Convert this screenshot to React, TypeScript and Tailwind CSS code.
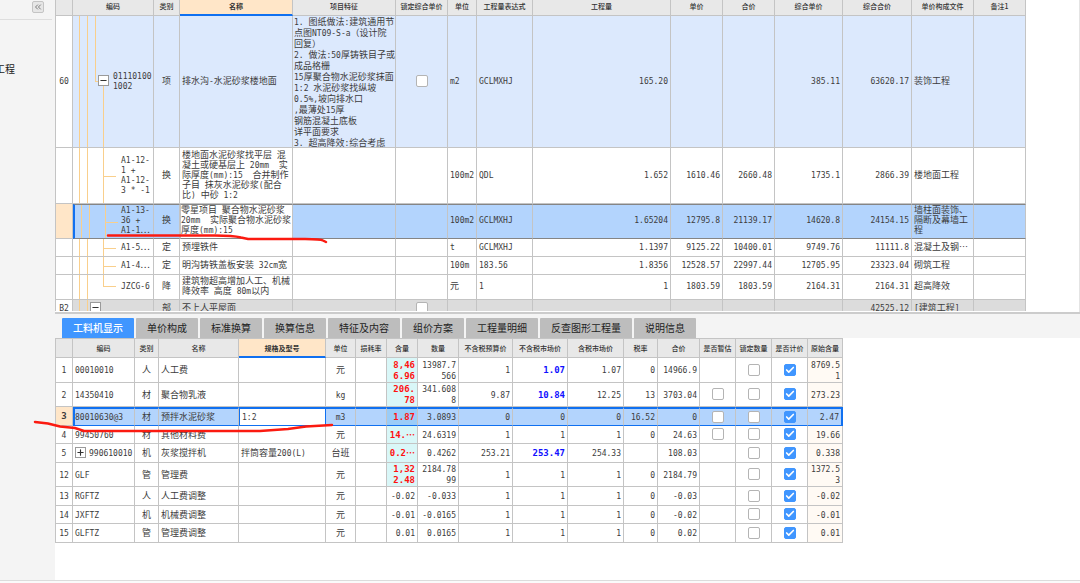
import React from 'react';
import clsx from 'clsx';
import { Check, ChevronsLeft, Minus, Plus } from 'lucide-react';

type Align = 'left' | 'center' | 'right';

interface Column {
  label: string;
  width: string;
  align: Align;
  active?: boolean;
}

interface QuotaRow {
  no: string;
  code: string;
  tree: 'parent' | 'child' | 'last' | 'section';
  height: string;
  tone?: 'item' | 'selected' | 'section';
  lock?: boolean;
  cells: string[];
}

interface ResourceRow {
  no: string;
  height: string;
  selected?: boolean;
  expandable?: boolean;
  cells: string[];
  estimate?: boolean;
  tinted?: boolean;
  blue?: boolean;
}

const QUOTA_COLUMNS: Column[] = [
  { label: '', width: 'w-[17px]', align: 'center' },
  { label: '编码', width: 'w-[81px]', align: 'left' },
  { label: '类别', width: 'w-[26px]', align: 'center' },
  { label: '名称', width: 'w-[113px]', align: 'left', active: true },
  { label: '项目特征', width: 'w-[103px]', align: 'left' },
  { label: '锁定综合单价', width: 'w-[52px]', align: 'center' },
  { label: '单位', width: 'w-[29px]', align: 'left' },
  { label: '工程量表达式', width: 'w-[56px]', align: 'left' },
  { label: '工程量', width: 'w-[138px]', align: 'right' },
  { label: '单价', width: 'w-[52px]', align: 'right' },
  { label: '合价', width: 'w-[52px]', align: 'right' },
  { label: '综合单价', width: 'w-[68px]', align: 'right' },
  { label: '综合合价', width: 'w-[69px]', align: 'right' },
  { label: '单价构成文件', width: 'w-[62px]', align: 'left' },
  { label: '备注1', width: 'w-[52px]', align: 'left' },
];

const FEATURES = `1. 图纸做法:建筑通用节
点图NT09-S-a（设计院
回复）
2. 做法:50厚铸铁目子或
成品格栅
15厚聚合物水泥砂浆抹面
1:2 水泥砂浆找纵坡
0.5%,坡向排水口
,最薄处15厚
钢筋混凝土底板
详平面要求
3. 超高降效:综合考虑`;

// cells: 类别, 名称, 项目特征, 锁定, 单位, 表达式, 工程量, 单价, 合价, 综合单价, 综合合价, 构成文件, 备注
const QUOTA_ROWS: QuotaRow[] = [
  {
    no: '60', code: '01110100\n1002', tree: 'parent', height: 'h-[132px]', tone: 'item', lock: true,
    cells: ['项', '排水沟-水泥砂浆楼地面', FEATURES, '', 'm2', 'GCLMXHJ', '165.20', '', '', '385.11', '63620.17', '装饰工程', ''],
  },
  {
    no: '', code: 'A1-12-\n1 +\nA1-12-\n3 * -1', tree: 'child', height: 'h-[56px]',
    cells: ['换', '楼地面水泥砂浆找平层 混\n凝土或硬基层上 20mm  实\n际厚度(mm):15  合并制作\n子目 抹灰水泥砂浆(配合\n比) 中砂 1:2', '', '', '100m2', 'QDL', '1.652', '1610.46', '2660.48', '1735.1', '2866.39', '楼地面工程', ''],
  },
  {
    no: '', code: 'A1-13-\n36 +\nA1-1⋯', tree: 'child', height: 'h-[35px]', tone: 'selected',
    cells: ['换', '零星项目 聚合物水泥砂浆\n20mm  实际聚合物水泥砂浆\n厚度(mm):15', '', '', '100m2', 'GCLMXHJ', '1.65204', '12795.8', '21139.17', '14620.8', '24154.15', '墙柱面装饰、\n隔断及幕墙工\n程', ''],
  },
  {
    no: '', code: 'A1-5⋯', tree: 'child', height: 'h-[18px]',
    cells: ['定', '预埋铁件', '', '', 't', 'GCLMXHJ', '1.1397', '9125.22', '10400.01', '9749.76', '11111.8', '混凝土及钢⋯', ''],
  },
  {
    no: '', code: 'A1-4⋯', tree: 'child', height: 'h-[18px]',
    cells: ['定', '明沟铸铁盖板安装 32cm宽', '', '', '100m', '183.56', '1.8356', '12528.57', '22997.44', '12705.95', '23323.04', '砌筑工程', ''],
  },
  {
    no: '', code: 'JZCG-6', tree: 'last', height: 'h-[25px]',
    cells: ['降', '建筑物超高增加人工、机械\n降效率 高度 80m以内', '', '', '元', '1', '1', '1803.59', '1803.59', '2164.31', '2164.31', '超高降效', ''],
  },
  {
    no: 'B2', code: '', tree: 'section', height: 'h-[18px]', tone: 'section', lock: true,
    cells: ['部', '不上人平屋面', '', '', '', '', '', '', '', '', '42525.12', '[建筑工程]', ''],
  },
];

const TABS = ['工料机显示', '单价构成', '标准换算', '换算信息', '特征及内容', '组价方案', '工程量明细', '反查图形工程量', '说明信息'];

const RESOURCE_COLUMNS: Column[] = [
  { label: '', width: 'w-[17px]', align: 'center' },
  { label: '编码', width: 'w-[62px]', align: 'left' },
  { label: '类别', width: 'w-[24px]', align: 'center' },
  { label: '名称', width: 'w-[80px]', align: 'left' },
  { label: '规格及型号', width: 'w-[87px]', align: 'left', active: true },
  { label: '单位', width: 'w-[30px]', align: 'center' },
  { label: '损耗率', width: 'w-[31px]', align: 'right' },
  { label: '含量', width: 'w-[31px]', align: 'right' },
  { label: '数量', width: 'w-[41px]', align: 'right' },
  { label: '不含税预算价', width: 'w-[54px]', align: 'right' },
  { label: '不含税市场价', width: 'w-[55px]', align: 'right' },
  { label: '含税市场价', width: 'w-[56px]', align: 'right' },
  { label: '税率', width: 'w-[34px]', align: 'right' },
  { label: '合价', width: 'w-[42px]', align: 'right' },
  { label: '是否暂估', width: 'w-[36px]', align: 'center' },
  { label: '锁定数量', width: 'w-[36px]', align: 'center' },
  { label: '是否计价', width: 'w-[36px]', align: 'center' },
  { label: '原始含量', width: 'w-[35px]', align: 'right' },
];

// cells: 编码 ... 合价, then 原始含量
const RESOURCE_ROWS: ResourceRow[] = [
  { no: '1', height: 'h-[25px]', tinted: true, blue: true, cells: ['00010010', '人', '人工费', '', '元', '', '8,46\n6.96', '13987.7\n566', '1', '1.07', '1.07', '0', '14966.9', '8769.5\n1'] },
  { no: '2', height: 'h-[24px]', tinted: true, blue: true, estimate: true, cells: ['14350410', '材', '聚合物乳液', '', 'kg', '', '206.\n78', '341.608\n8', '9.87', '10.84', '12.25', '13', '3703.04', '273.23'] },
  { no: '3', height: 'h-[19px]', tinted: true, selected: true, estimate: true, cells: ['80010630@3', '材', '预拌水泥砂浆', '1:2', 'm3', '', '1.87', '3.0893', '0', '0', '0', '16.52', '0', '2.47'] },
  { no: '4', height: 'h-[18px]', tinted: true, estimate: true, cells: ['99450760', '材', '其他材料费', '', '元', '', '14.⋯', '24.6319', '1', '1', '1', '0', '24.63', '19.66'] },
  { no: '5', height: 'h-[19px]', tinted: true, blue: true, expandable: true, cells: ['990610010', '机', '灰浆搅拌机', '拌筒容量200(L)', '台班', '', '0.2⋯', '0.4262', '253.21', '253.47', '254.33', '', '108.03', '0.338'] },
  { no: '12', height: 'h-[24px]', tinted: true, cells: ['GLF', '管', '管理费', '', '元', '', '1,32\n2.48', '2184.78\n99', '1', '1', '1', '0', '2184.79', '1372.5\n3'] },
  { no: '13', height: 'h-[19px]', cells: ['RGFTZ', '人', '人工费调整', '', '元', '', '-0.02', '-0.033', '1', '1', '1', '0', '-0.03', '-0.02'] },
  { no: '14', height: 'h-[18px]', cells: ['JXFTZ', '机', '机械费调整', '', '元', '', '-0.01', '-0.0165', '1', '1', '1', '0', '-0.02', '-0.01'] },
  { no: '15', height: 'h-[19px]', cells: ['GLFTZ', '管', '管理费调整', '', '元', '', '0.01', '0.0165', '1', '1', '1', '0', '0.02', '0.01'] },
];

const alignClass: Record<Align, string> = {
  left: 'text-left',
  center: 'text-center',
  right: 'text-right pr-[2px]',
};

// Latin and digits are set in a mono face one size below the Chinese text
const Txt: React.FC<{ children: string; strong?: boolean }> = ({ children, strong }) => (
  <span className={clsx('whitespace-pre', strong && 'font-bold')}>
    {children.split(/([\x20-\x7e]+)/).map((part, i) =>
      i % 2 ? (
        <span key={i} className={clsx("font-['DejaVu_Sans_Mono',monospace] leading-none", strong ? 'text-[9px]' : 'text-[8px]')}>
          {part}
        </span>
      ) : (
        part
      ),
    )}
  </span>
);

const Box: React.FC<{ label: string; checked?: boolean }> = ({ label, checked }) => (
  <span className="relative inline-block size-[12px] align-middle">
    <input
      type="checkbox"
      aria-label={label}
      defaultChecked={checked}
      className="peer block size-[12px] appearance-none rounded-[2px] border border-[#b4b4b4] bg-white checked:border-[#4096ff] checked:bg-[#4096ff]"
    />
    <Check size={10} strokeWidth={4} className="pointer-events-none absolute top-px left-px hidden text-white peer-checked:block" />
  </span>
);

const Toggle: React.FC<{ open?: boolean; label: string }> = ({ open, label }) => (
  <button type="button" aria-label={label} className="grid size-[11px] shrink-0 place-items-center border border-[#9a9a9a] bg-white text-[#333]">
    {open ? <Minus size={9} strokeWidth={3} /> : <Plus size={9} strokeWidth={3} />}
  </button>
);

const HeadRow: React.FC<{ columns: Column[]; cellClass: string }> = ({ columns, cellClass }) => (
  <tr>
    {columns.map((c, i) => (
      <th
        key={i}
        className={clsx(
          'border-r border-[#c4c4c4] p-0 text-[7px] whitespace-nowrap text-[#333]',
          c.width,
          cellClass,
          c.active ? 'border-b-2 border-b-[#1070f0] bg-[#ffe6c8] font-bold' : 'border-b bg-[#e8e8e8] font-medium',
        )}
      >
        {c.label}
      </th>
    ))}
    <td />
  </tr>
);

const Line: React.FC<{ className: string }> = ({ className }) => (
  <i className={clsx('absolute border-[#f9cf8c]', className)} />
);

const TreeLines: React.FC<{ kind: QuotaRow['tree'] }> = ({ kind }) => (
  <>
    <Line className="inset-y-0 left-[6px] border-l" />
    <Line className="inset-y-0 left-[14px] border-l" />
    {kind === 'parent' && (
      <>
        <Line className="top-0 bottom-1/2 left-[22px] w-[3px] border-b border-l" />
        <Line className="top-1/2 bottom-0 left-[30px] border-l" />
      </>
    )}
    {kind === 'child' && <Line className="inset-y-0 left-[30px] border-l" />}
    {kind === 'child' && <Line className="top-1/2 left-[30px] w-[13px] border-b" />}
    {kind === 'last' && <Line className="top-0 bottom-1/2 left-[30px] w-[13px] border-b border-l" />}
  </>
);

const QuotaGrid: React.FC = () => (
  <table className="w-full table-fixed border-separate border-spacing-0 border-l border-[#c4c4c4] leading-[10px]">
    <thead>
      <HeadRow columns={QUOTA_COLUMNS} cellClass="h-[16px] pb-[3px] leading-[10px]" />
    </thead>
    <tbody>
      {QUOTA_ROWS.map((row, r) => {
        const selected = row.tone === 'selected';
        const cell = clsx(
          'border-r border-b border-[#c4c4c4] px-0 pt-0',
          selected ? 'pb-[3px]' : 'pb-[2px]',
          row.height,
          row.tone === 'item' && 'bg-[#dce9fd]',
          row.tone === 'section' && 'bg-[#dcdcdc]',
          selected && 'border-t border-y-[#858585]',
        );
        return (
          <tr key={r}>
            <td className={clsx('border-r border-b border-[#c4c4c4] px-0 pt-0 pb-[2px] text-center', selected && 'bg-[#ffe6c8]')}>
              <Txt>{row.no}</Txt>
            </td>
            <td className={clsx(cell, 'relative', selected && 'border-l-2 border-l-[#1070f0] bg-[#b3d4fd]')}>
              <TreeLines kind={row.tree} />
              {row.tree === 'parent' && (
                <div className="relative flex items-center gap-[4px] pl-[25px]">
                  <Toggle open label="折叠" />
                  <Txt>{row.code}</Txt>
                </div>
              )}
              {row.tree === 'section' && (
                <div className="relative pl-[17px]">
                  <Toggle open label="折叠" />
                </div>
              )}
              {(row.tree === 'child' || row.tree === 'last') && (
                <div className={selected ? 'pl-[46px]' : 'pl-[48px]'}>
                  <Txt>{row.code}</Txt>
                </div>
              )}
            </td>
            {row.cells.map((text, i) => {
              const column = QUOTA_COLUMNS[i + 2];
              const features = i === 2 && text !== '';
              return (
                <td
                  key={i}
                  className={clsx(
                    cell,
                    alignClass[column.align],
                    features && 'align-top',
                    column.align === 'left' && !(selected && column.active) && (features ? 'pl-px' : 'pl-[2px]'),
                    selected && (column.active ? 'border border-[#858585] bg-white' : 'bg-[#b3d4fd]'),
                  )}
                >
                  {i === 3 && row.lock ? (
                    <Box label="锁定综合单价" />
                  ) : (
                    <div className={clsx(features && 'h-[129px] leading-[11px]')}>
                      <Txt>{text}</Txt>
                    </div>
                  )}
                </td>
              );
            })}
            <td />
          </tr>
        );
      })}
    </tbody>
  </table>
);

const ResourceGrid: React.FC = () => (
  <table className="w-full table-fixed border-separate border-spacing-0 border-l border-[#c4c4c4] leading-[11px]">
    <thead>
      <HeadRow columns={RESOURCE_COLUMNS} cellClass="h-[20px] border-t border-t-[#c4c4c4] leading-[10px]" />
    </thead>
    <tbody>
      {RESOURCE_ROWS.map((row) => {
        const cell = clsx(
          'border-r border-b border-[#c4c4c4] px-0 pt-0 pb-px',
          row.height,
          row.selected && 'border-y-2 border-y-[#1070f0]',
        );
        const fill = row.selected && 'bg-[#b3d4fd]';
        return (
          <tr key={row.no}>
            <td className={clsx('border-r border-b border-[#c4c4c4] px-0 pt-0 pb-px text-center', row.selected && 'bg-[#ffe6c8]')}>
              <Txt strong={row.selected}>{row.no}</Txt>
            </td>
            {row.cells.slice(0, 13).map((text, i) => {
              const column = RESOURCE_COLUMNS[i + 1];
              const red = i === 6 && row.tinted;
              const blue = i === 9 && row.blue;
              return (
                <td
                  key={i}
                  className={clsx(
                    cell,
                    alignClass[column.align],
                    column.align === 'left' && !(row.selected && i === 0) && 'pl-[2px]',
                    row.selected && i === 0 && 'border-l-2 border-l-[#1070f0]',
                    row.selected && column.active && 'border-x border-x-[#1070f0] bg-white',
                    !(row.selected && (column.active || red)) && fill,
                    red && 'text-[#ff1010]',
                    red && (row.selected ? 'bg-[#9accf8]' : 'bg-[#d9f7f8]'),
                    blue && 'text-[#1010ff]',
                  )}
                >
                  {i === 0 && row.expandable ? (
                    <div className="flex items-center gap-[3px]">
                      <Toggle label="展开" />
                      <Txt>{text}</Txt>
                    </div>
                  ) : (
                    <Txt strong={red || blue}>{text}</Txt>
                  )}
                </td>
              );
            })}
            <td className={clsx(cell, fill, 'text-center')}>{row.estimate && <Box label="是否暂估" />}</td>
            <td className={clsx(cell, fill, 'text-center')}><Box label="锁定数量" /></td>
            <td className={clsx(cell, fill, 'text-center')}><Box label="是否计价" checked /></td>
            <td className={clsx(cell, 'pr-[2px] text-right', row.selected ? 'border-r-2 border-r-[#1070f0] bg-[#b3d4fd]' : 'bg-[#fffaf4]')}>
              <Txt>{row.cells[13]}</Txt>
            </td>
            <td />
          </tr>
        );
      })}
    </tbody>
  </table>
);

export default function App() {
  return (
    <div className="relative flex h-screen flex-col overflow-hidden bg-[#fafafa] font-['Noto_Sans_CJK_SC',sans-serif] text-[9px] leading-[11px] text-[#3c3c3c]">
      <div className="flex min-h-0 flex-1 border-b border-[#dcdcdc] bg-white">
        <aside className="w-[55px] shrink-0 overflow-hidden bg-[#f4f4f4]">
          <div className="mr-[3px] flex h-[20px] justify-end border-b border-[#dedede] pt-px pr-[8px]">
            <button type="button" aria-label="收起" className="grid size-[12px] place-items-center rounded-[2px] border border-[#c4c4c4] bg-[#e6e6e6] text-[#666]">
              <ChevronsLeft size={10} />
            </button>
          </div>
          <p className="-ml-[5px] pt-[43px] text-[10px] leading-[12px] text-[#222]">工程</p>
        </aside>

        <main className="flex min-w-0 flex-1 flex-col">
          <section className="h-[312px] shrink-0 overflow-hidden border-r border-[#e4e4e4]">
            <div className="h-[311px] overflow-hidden">
              <QuotaGrid />
            </div>
          </section>

          <nav className="flex h-[26px] shrink-0 items-end gap-[2px] border-t-2 border-[#cccccc] bg-[#f4f4f4] pl-[7px]">
            {TABS.map((tab, i) => (
              <button
                key={tab}
                type="button"
                className={clsx(
                  'h-[20px] rounded-t-[1px] px-[11px] text-[10px] leading-[20px]',
                  i === 0 ? 'bg-[#4096ff] font-medium text-white' : 'bg-[#bdbdbd] text-[#222]',
                )}
              >
                {tab}
              </button>
            ))}
          </nav>

          <section className="min-h-0 flex-1 overflow-hidden">
            <ResourceGrid />
          </section>
        </main>
      </div>
      <div className="h-[2px] shrink-0" />

      {/* red pen marks */}
      <svg className="pointer-events-none absolute top-[230px] left-[105px]" width="225" height="16" fill="none" stroke="#fb1a10" strokeWidth="2.5" strokeLinecap="round">
        <path d="M3 5.500H110Q128 5.500 136 7.500L143 9H200Q216 9.200 218 10.500L221 12" />
      </svg>
      <svg className="pointer-events-none absolute top-[418px] left-[32px]" width="304" height="16" fill="none" stroke="#fb1a10" strokeWidth="2.5" strokeLinecap="round">
        <path d="M3 4L16 5.500L28 8.500L43 10L52 13H228L256 11L274 8.500L300 7" />
      </svg>
    </div>
  );
}
